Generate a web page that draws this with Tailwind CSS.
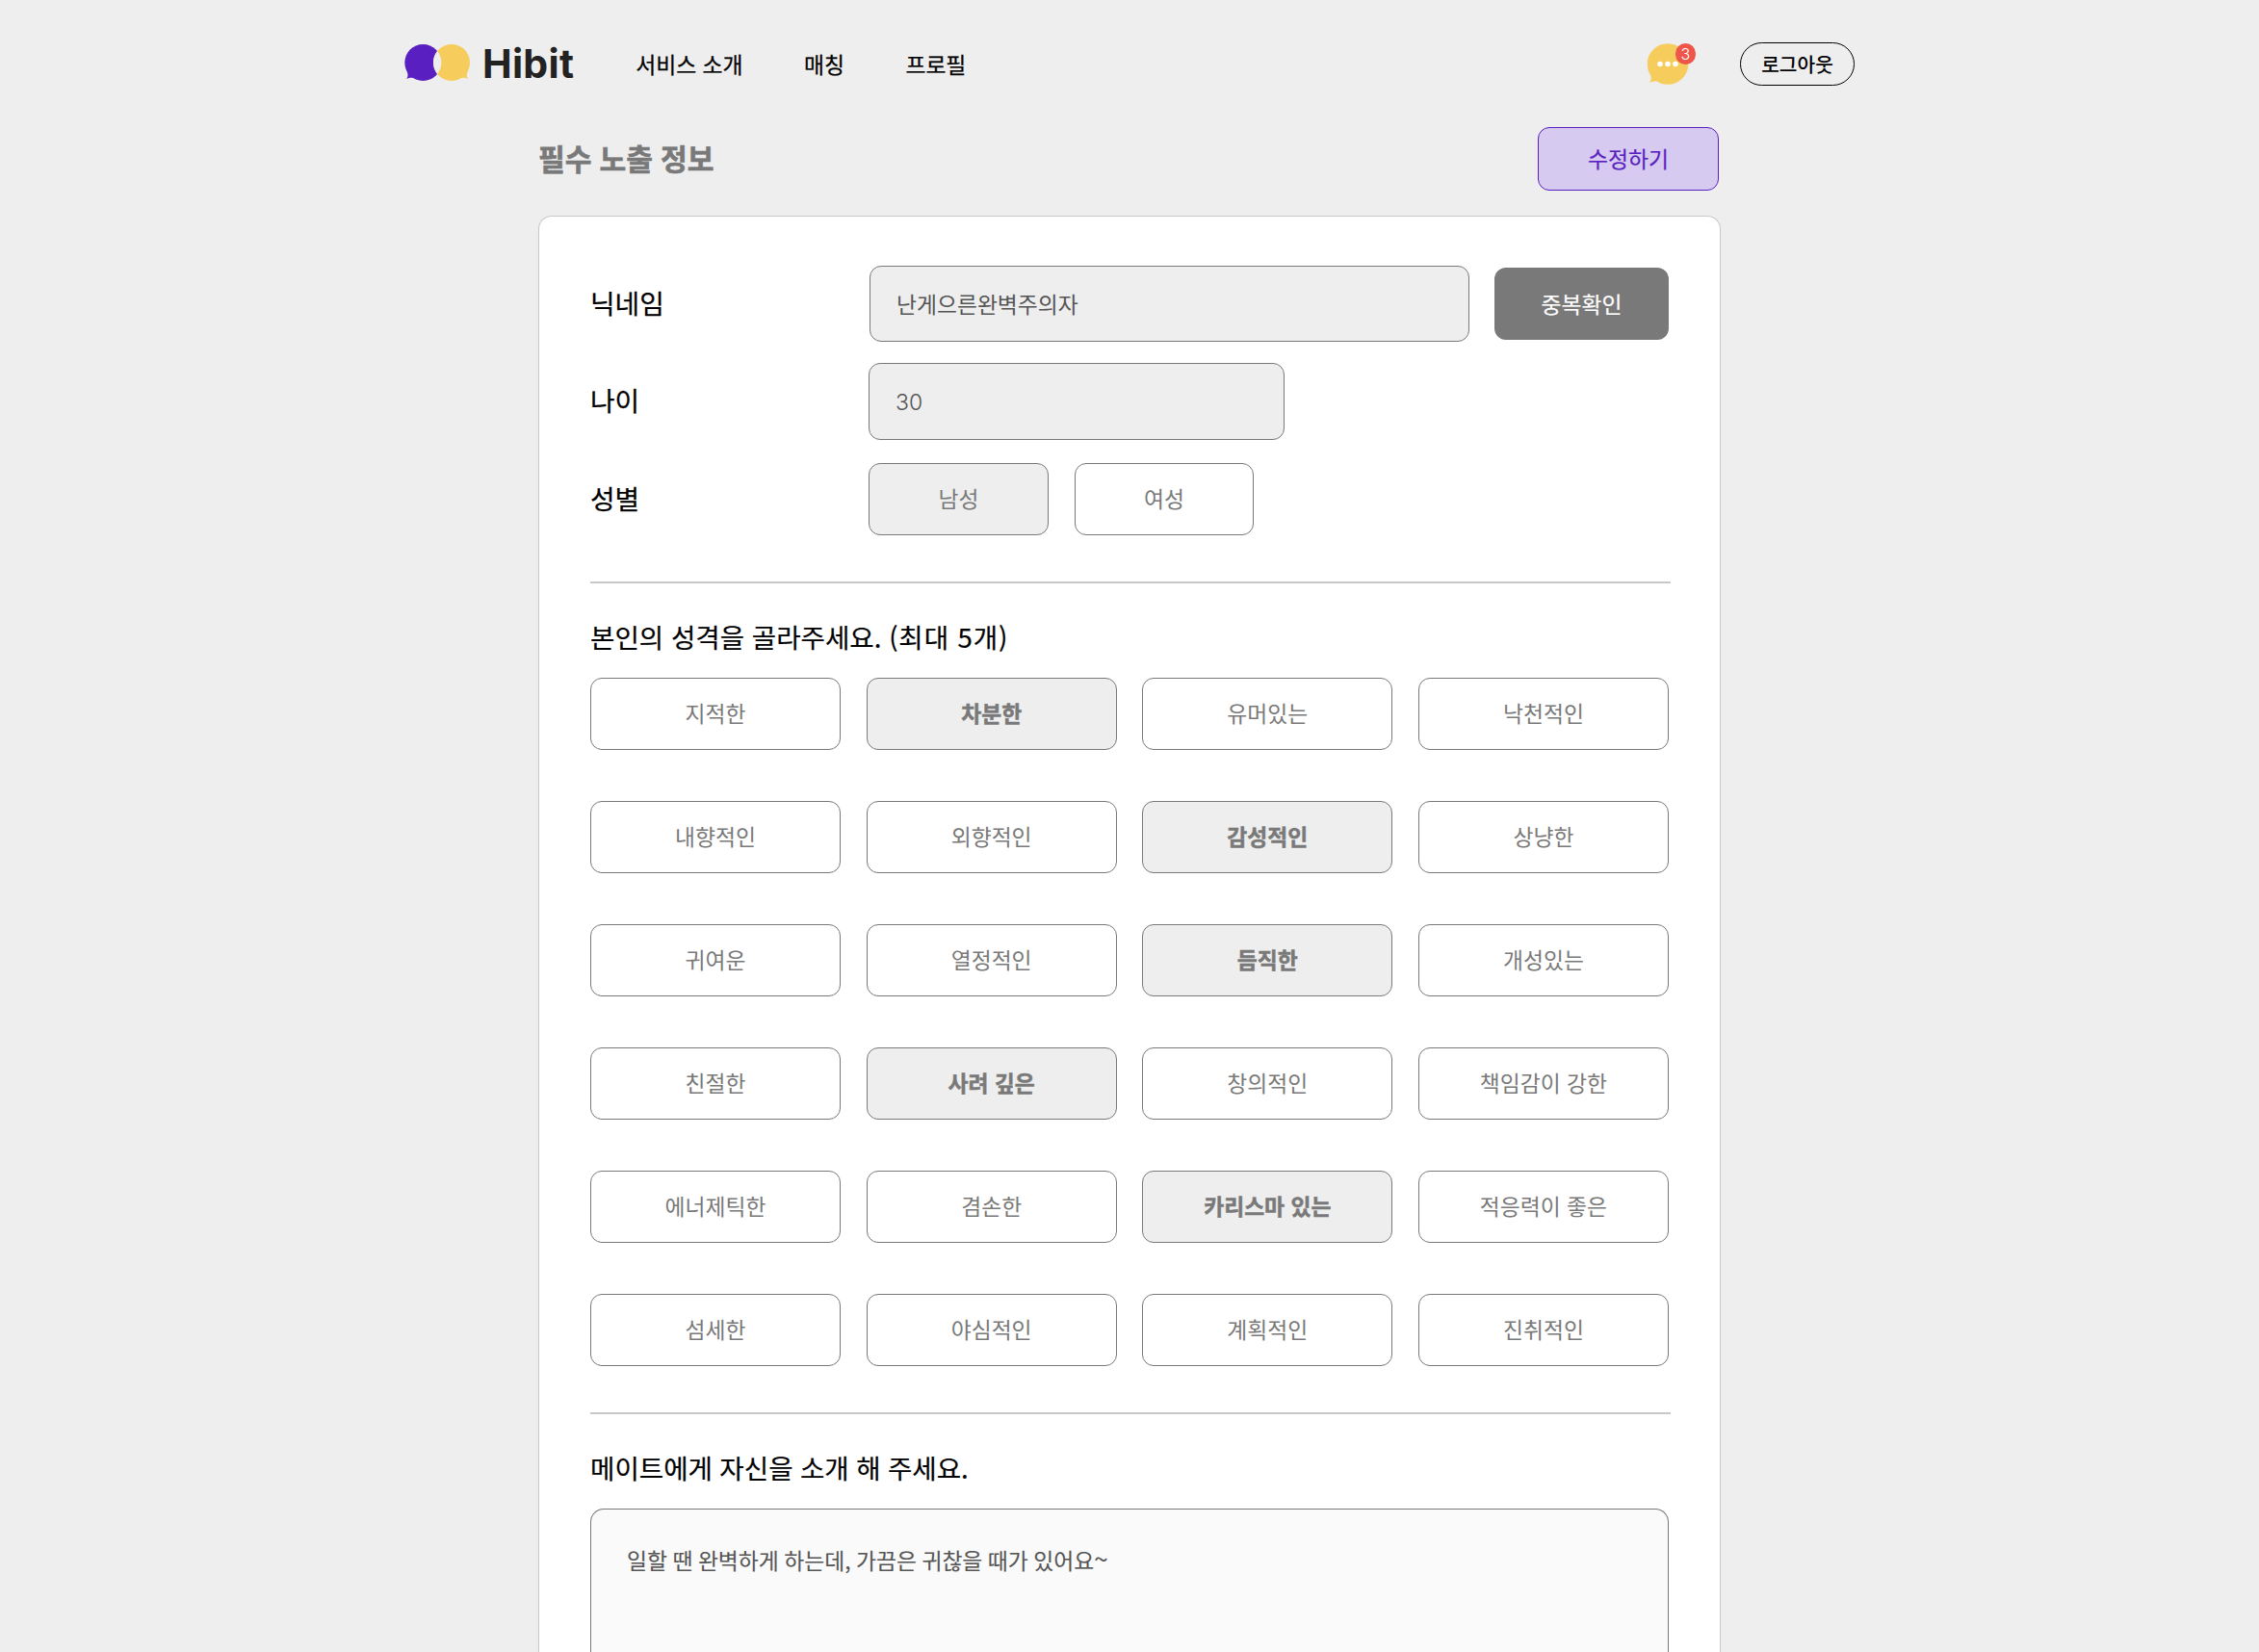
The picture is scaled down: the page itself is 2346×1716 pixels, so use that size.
<!DOCTYPE html>
<html lang="ko">
<head>
<meta charset="utf-8">
<title>Hibit</title>
<script src="https://cdn.jsdelivr.net/npm/@tailwindcss/browser@4"></script>
</head>
<body class="h-[1716px] overflow-hidden bg-[#eee] font-['Noto_Sans_CJK_KR',sans-serif] text-[22.8px] leading-8 text-black">
<header class="mx-auto flex h-[132px] w-[1506px] items-start pt-11">
  <a class="flex h-[45px] items-center">
    <svg class="h-[45px] w-[82px]" viewBox="420 44 82 45">
      <circle cx="439.3" cy="65" r="19" fill="#5a1fc1"/>
      <path d="M422 82c2-2 2-6 0-9l9 8c-3-.5-6-.5-9 1z" fill="#5a1fc1"/>
      <circle cx="469" cy="65" r="19" fill="#f6cd5c"/>
      <path d="M486.300 82c-2-2-2-6 0-9l-9 8c3-.5 6-.5 9 1z" fill="#f6cd5c"/>
      <path d="M454.150 53.100a19 19 0 0 1 0 23.800a19 19 0 0 1 0-23.800z" fill="#eee"/>
    </svg>
    <span class="-ml-px font-['Inter',sans-serif] text-[41px] font-bold leading-[45px] tracking-[0.3px] text-[#222]">Hibit</span>
  </a>
  <nav class="ml-[64px] flex h-[45px] items-center gap-[63.5px] [-webkit-text-stroke:0.25px]">
    <a>서비스 소개</a><a>매칭</a><a>프로필</a>
  </nav>
  <div class="ml-auto flex items-center gap-[46px]">
    <div class="relative h-[45px] w-[50px]">
      <svg class="size-full" viewBox="1711 44 50 45">
        <circle cx="1732" cy="66.500" r="21.300" fill="#f6cd5c"/>
        <path d="M1713 86c2-3 2.500-6 .5-10l9 8c-3 .3-6 .5-9.500 2z" fill="#f6cd5c"/>
        <g fill="#fff"><circle cx="1724" cy="66.500" r="2.800"/><circle cx="1732" cy="66.500" r="2.800"/><circle cx="1740" cy="66.500" r="2.800"/></g>
      </svg>
      <span class="absolute right-0 top-[1px] flex size-[21.500px] items-center justify-center rounded-full bg-[#ee564a] font-['Inter',sans-serif] text-[16px] font-light text-white">3</span>
    </div>
    <button class="h-[45px] w-[119px] rounded-full border border-black pb-0.5 text-[20.300px] font-medium">로그아웃</button>
  </div>
</header>
<main class="mx-auto w-[1228px]">
  <div class="flex h-[66px] items-center justify-between pr-0.5">
    <h1 class="pb-[3px] text-[30.200px] font-bold text-[#797979] [-webkit-text-stroke:0.6px] [word-spacing:-0.5px]">필수 노출 정보</h1>
    <button class="h-[66px] w-[188px] rounded-[12px] border border-[#5a1fc1] bg-[#d6caf0] text-[#5a1fc1] [-webkit-text-stroke:0.2px]">수정하기</button>
  </div>
  <section class="mt-[26px] h-[1492px] rounded-t-[14px] border border-b-0 border-[#c8c8c8] bg-white px-[53px] pt-[51px]">
    <div class="flex h-[79px] items-center">
      <label class="w-[290px] pb-[3px] text-[27.800px] [-webkit-text-stroke:0.25px]">닉네임</label>
      <div class="flex h-[79px] w-[623px] items-center rounded-[12px] border border-[#797979] bg-[#eee] px-[27px] text-[#555]">난게으른완벽주의자</div>
      <button class="ml-[26px] h-[75px] w-[181px] rounded-[12px] bg-[#797979] text-white [-webkit-text-stroke:0.2px]">중복확인</button>
    </div>
    <div class="mt-[22px] flex h-[80px] items-center">
      <label class="w-[289px] pb-[4px] text-[27.800px] [-webkit-text-stroke:0.25px]">나이</label>
      <div class="flex h-[80px] w-[432px] items-center rounded-[12px] border border-[#797979] bg-[#eee] px-[27px] pt-0.5 font-['Inter',sans-serif] text-[23px] font-light text-[#555]">30</div>
    </div>
    <div class="mt-6 flex h-[75px] items-center text-[#797979]">
      <label class="w-[289px] pb-[3px] text-[27.800px] text-black [-webkit-text-stroke:0.25px]">성별</label>
      <button class="h-[75px] w-[187px] rounded-[12px] border border-[#797979] bg-[#eee] pb-0.5">남성</button>
      <button class="ml-[27px] h-[75px] w-[186px] rounded-[12px] border border-[#797979] pb-0.5">여성</button>
    </div>
    <div class="mt-12 h-0.5 w-[1122px] bg-[#c8c8c8]"></div>
    <h2 class="mt-[35px] h-10 text-[27.600px] leading-10 [-webkit-text-stroke:0.2px]">본인의 성격을 골라주세요. <span class="tracking-[0.9px]">(최대 5개)</span></h2>
    <div class="mt-[23px] grid w-[1120px] grid-cols-[260px_260px_260px_260px] gap-x-[26.66px] gap-y-[53px] text-[#797979] [&>button]:h-[75px] [&>button]:rounded-[12px] [&>button]:border [&>button]:border-[#797979] [&>button]:pb-px">
      <button>지적한</button><button class="bg-[#eee] font-bold [-webkit-text-stroke:0.5px]">차분한</button><button>유머있는</button><button>낙천적인</button>
      <button>내향적인</button><button>외향적인</button><button class="bg-[#eee] font-bold [-webkit-text-stroke:0.5px]">감성적인</button><button>상냥한</button>
      <button>귀여운</button><button>열정적인</button><button class="bg-[#eee] font-bold [-webkit-text-stroke:0.5px]">듬직한</button><button>개성있는</button>
      <button>친절한</button><button class="bg-[#eee] font-bold [-webkit-text-stroke:0.5px]">사려 깊은</button><button>창의적인</button><button>책임감이 강한</button>
      <button>에너제틱한</button><button>겸손한</button><button class="bg-[#eee] font-bold [-webkit-text-stroke:0.5px]">카리스마 있는</button><button>적응력이 좋은</button>
      <button>섬세한</button><button>야심적인</button><button>계획적인</button><button>진취적인</button>
    </div>
    <div class="mt-12 h-0.5 w-[1122px] bg-[#c8c8c8]"></div>
    <h2 class="mt-[35px] h-10 text-[27.600px] leading-10 [-webkit-text-stroke:0.2px] [word-spacing:-0.3px]">메이트에게 자신을 소개 해 주세요.</h2>
    <div class="mt-[23px] h-[149px] w-[1120px] rounded-t-[14px] border border-b-0 border-[#797979] bg-[#fafafa] px-[37px] pt-[37px] text-[#555] [-webkit-text-stroke:0.1px] [word-spacing:-0.9px]">일할 땐 완벽하게 하는데, 가끔은 귀찮을 때가 있어요<span class="text-[26px] leading-none">~</span></div>
  </section>
</main>
</body>
</html>
